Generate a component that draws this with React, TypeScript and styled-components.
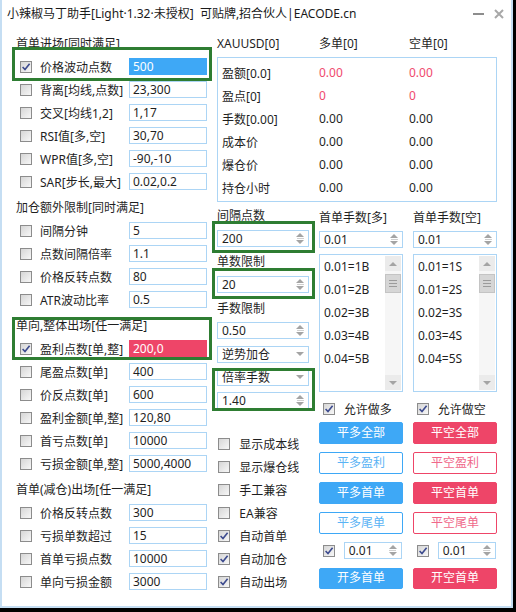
import styled, { createGlobalStyle } from "styled-components";

const BLUE = "#3ea8f6";
const RED = "#ee4568";
const GREEN = "#2e7d32";
const LINE = "#acd5f5";

const GlobalStyle = createGlobalStyle`
  html, body { margin: 0; padding: 0; background: #000; }
  body {
    font-family: "Noto Sans", "Noto Sans CJK SC", sans-serif;
    font-size: 12px;
    color: #1f1f1f;
  }
`;

type Entry = { label: string; value: string; on?: boolean; fill?: string };

const entryRows: Entry[] = [
  { label: "价格波动点数", value: "500", on: true, fill: BLUE },
  { label: "背离[均线,点数]", value: "23,300" },
  { label: "交叉[均线1,2]", value: "1,17" },
  { label: "RSI值[多,空]", value: "30,70" },
  { label: "WPR值[多,空]", value: "-90,-10" },
  { label: "SAR[步长,最大]", value: "0.02,0.2" },
];

const addRows: Entry[] = [
  { label: "间隔分钟", value: "5" },
  { label: "点数间隔倍率", value: "1.1" },
  { label: "价格反转点数", value: "80" },
  { label: "ATR波动比率", value: "0.5" },
];

const exitRows: Entry[] = [
  { label: "盈利点数[单,整]", value: "200,0", on: true, fill: RED },
  { label: "尾盈点数[单]", value: "400" },
  { label: "价反点数[单]", value: "600" },
  { label: "盈利金额[单,整]", value: "120,80" },
  { label: "首亏点数[单]", value: "10000" },
  { label: "亏损金额[单,整]", value: "5000,4000" },
];

const firstExitRows: Entry[] = [
  { label: "价格反转点数", value: "300" },
  { label: "亏损单数超过", value: "15" },
  { label: "首单亏损点数", value: "10000" },
  { label: "单向亏损金额", value: "3000" },
];

const infoRows = [
  { label: "盈额[0.0]", long: "0.00", short: "0.00", hot: true },
  { label: "盈点[0]", long: "0", short: "0", hot: true },
  { label: "手数[0.00]", long: "0.00", short: "0.00" },
  { label: "成本价", long: "0.00", short: "0.00" },
  { label: "爆仓价", long: "0.00", short: "0.00" },
  { label: "持仓小时", long: "0.00", short: "0.00" },
];

const toggles = [
  { label: "显示成本线" },
  { label: "显示爆仓线" },
  { label: "手工兼容" },
  { label: "EA兼容" },
  { label: "自动首单", on: true },
  { label: "自动加仓", on: true },
  { label: "自动出场", on: true },
];

const lots = ["0.01", "0.01", "0.02", "0.03", "0.04"];

export default function App() {
  return (
    <>
      <GlobalStyle />
      <Window>
        <TitleBar>
          <Caption>小辣椒马丁助手[Light·1.32·未授权]  可贴牌,招合伙人|EACODE.cn</Caption>
          <WinButtons>
            <svg width="12" height="4" viewBox="0 0 12 4">
              <rect x="0" y="1" width="11" height="2" fill="#8d8d8d" />
            </svg>
            <svg width="10" height="10" viewBox="0 0 10 10">
              <path d="M1 1 L9 9 M9 1 L1 9" stroke="#a8a8a8" strokeWidth="2" />
            </svg>
          </WinButtons>
        </TitleBar>

        <Body>
          <LeftCol>
            <SectionTitle>首单进场[同时满足]</SectionTitle>
            {entryRows.map((r, i) =>
              i === 0 ? (
                <Framed key={r.label} $top={-8} $bottom={-3} $left={0} $right={0}>
                  <EntryRow {...r} />
                </Framed>
              ) : (
                <EntryRow key={r.label} {...r} />
              )
            )}

            <SectionTitle $gap={3}>加仓额外限制[同时满足]</SectionTitle>
            {addRows.map((r) => (
              <EntryRow key={r.label} {...r} />
            ))}

            <Framed $mt={3} $top={3} $bottom={0} $left={0} $right={0}>
              <SectionTitle>单向,整体出场[任一满足]</SectionTitle>
              <EntryRow {...exitRows[0]} />
            </Framed>
            {exitRows.slice(1).map((r) => (
              <EntryRow key={r.label} {...r} />
            ))}

            <SectionTitle $gap={3}>首单(减仓)出场[任一满足]</SectionTitle>
            {firstExitRows.map((r) => (
              <EntryRow key={r.label} {...r} />
            ))}
          </LeftCol>

          <RightArea>
            <Header>
              <span>XAUUSD[0]</span>
              <span>多单[0]</span>
              <span>空单[0]</span>
            </Header>
            <InfoBox>
              {infoRows.map((r) => (
                <InfoRow key={r.label}>
                  <span>{r.label}</span>
                  <Value $hot={r.hot}>{r.long}</Value>
                  <Value $hot={r.hot}>{r.short}</Value>
                </InfoRow>
              ))}
            </InfoBox>

            <Lower>
              <MidCol>
                <Slot>间隔点数</Slot>
                <Framed $top={-6} $bottom={-3.5} $left={-5} $right={-6}>
                  <Slot>
                    <Spin value="200" />
                  </Slot>
                </Framed>
                <Slot>单数限制</Slot>
                <Framed $top={-4.5} $bottom={-3} $left={-5} $right={-6}>
                  <Slot>
                    <Spin value="20" />
                  </Slot>
                </Framed>
                <Slot>手数限制</Slot>
                <Slot>
                  <Spin value="0.50" />
                </Slot>
                <Slot>
                  <Select value="逆势加仓" />
                </Slot>
                <Framed $top={2.5} $bottom={1.5} $left={-5} $right={-6}>
                  <Slot>
                    <Select value="倍率手数" />
                  </Slot>
                  <Slot>
                    <Spin value="1.40" />
                  </Slot>
                </Framed>

                <ToggleList>
                  {toggles.map((t) => (
                    <ToggleRow key={t.label}>
                      <Check on={t.on} />
                      <span>{t.label}</span>
                    </ToggleRow>
                  ))}
                </ToggleList>
              </MidCol>

              <RightCols>
                <Pair $mt={3} $h={23}>
                  <CellText>首单手数[多]</CellText>
                  <CellText>首单手数[空]</CellText>
                </Pair>
                <Pair $h={23}>
                  <Spin value="0.01" />
                  <Spin value="0.01" />
                </Pair>
                <Pair $mt={3} $h={138}>
                  <LotList suffix="B" />
                  <LotList suffix="S" />
                </Pair>
                <Pair $mt={6} $h={22}>
                  <CheckCell>
                    <Check on />
                    <span>允许做多</span>
                  </CheckCell>
                  <CheckCell>
                    <Check on />
                    <span>允许做空</span>
                  </CheckCell>
                </Pair>
                <Pair $mt={2} $h={21.5}>
                  <Btn $tone={BLUE}>平多全部</Btn>
                  <Btn $tone={RED}>平空全部</Btn>
                </Pair>
                <Pair $mt={8.5} $h={21.5}>
                  <Btn $tone={BLUE} $outline>平多盈利</Btn>
                  <Btn $tone={RED} $outline>平空盈利</Btn>
                </Pair>
                <Pair $mt={8.5} $h={21.5}>
                  <Btn $tone={BLUE}>平多首单</Btn>
                  <Btn $tone={RED}>平空首单</Btn>
                </Pair>
                <Pair $mt={8.5} $h={21.5}>
                  <Btn $tone={BLUE} $outline>平多尾单</Btn>
                  <Btn $tone={RED} $outline>平空尾单</Btn>
                </Pair>
                <Pair $mt={8.5} $h={17.5}>
                  <CheckCell>
                    <Check on />
                    <Spin value="0.01" width={58} />
                  </CheckCell>
                  <CheckCell>
                    <Check on />
                    <Spin value="0.01" width={58} />
                  </CheckCell>
                </Pair>
                <Pair $mt={8} $h={21.5}>
                  <Btn $tone={BLUE}>开多首单</Btn>
                  <Btn $tone={RED}>开空首单</Btn>
                </Pair>
              </RightCols>
            </Lower>
          </RightArea>
        </Body>
      </Window>
    </>
  );
}

function EntryRow({ label, value, on, fill }: Entry) {
  return (
    <Row>
      <Check on={on} />
      <span>{label}</span>
      <Field $fill={fill}>{value}</Field>
    </Row>
  );
}

function Check({ on }: { on?: boolean }) {
  return (
    <Box>
      {on && (
        <svg width="10" height="10" viewBox="0 0 10 10">
          <path d="M1.6 5 L4 7.6 L8.6 1.8" fill="none" stroke="#3d4b8e" strokeWidth="1.6" />
        </svg>
      )}
    </Box>
  );
}

function Spin({ value, width }: { value: string; width?: number }) {
  return (
    <SpinBox $w={width}>
      <SpinText>{value}</SpinText>
      <Arrows>
        <TriUp />
        <Tick />
        <TriDown />
      </Arrows>
    </SpinBox>
  );
}

function Select({ value }: { value: string }) {
  return (
    <SpinBox>
      <SpinText>{value}</SpinText>
      <TriDown />
    </SpinBox>
  );
}

function LotList({ suffix }: { suffix: string }) {
  return (
    <ListBox>
      <ListItems>
        {lots.map((l, i) => (
          <ListItem key={i}>
            {l}={i + 1}
            {suffix}
          </ListItem>
        ))}
      </ListItems>
      <ScrollBar>
        <ScrollBtn>
          <TriUp />
        </ScrollBtn>
        <Thumb>
          <Grip />
          <Grip />
          <Grip />
        </Thumb>
        <ScrollBtn $end>
          <TriDown />
        </ScrollBtn>
      </ScrollBar>
    </ListBox>
  );
}

const Window = styled.div`
  width: 509px;
  height: 606px;
  background: #fff;
  border: 2px solid #c5def3;
  border-top: none;
  display: flex;
  flex-direction: column;
`;

const TitleBar = styled.div`
  height: 30px;
  box-sizing: border-box;
  padding: 5px 7px 0 5px;
  display: flex;
  align-items: flex-start;
  line-height: 17px;
`;

const Caption = styled.span`
  white-space: pre;
  color: #1a1a1a;
`;

const WinButtons = styled.div`
  margin-left: auto;
  display: flex;
  align-items: center;
  gap: 9px;
  height: 17px;
`;

const Body = styled.div`
  display: flex;
  padding-left: 10px;
`;

const LeftCol = styled.div`
  width: 200px;
  padding-top: 2px;
  display: flex;
  flex-direction: column;
`;

const SectionTitle = styled.div<{ $gap?: number }>`
  height: 23px;
  line-height: 23px;
  padding-left: 4px;
  margin-top: ${(p) => p.$gap ?? 0}px;
  white-space: nowrap;
`;

const Framed = styled.div<{ $top: number; $bottom: number; $left: number; $right: number; $mt?: number }>`
  position: relative;
  margin-top: ${(p) => p.$mt ?? 0}px;
  &::after {
    content: "";
    position: absolute;
    top: ${(p) => p.$top}px;
    bottom: ${(p) => p.$bottom}px;
    left: ${(p) => p.$left}px;
    right: ${(p) => p.$right}px;
    border: 3px solid ${GREEN};
    pointer-events: none;
  }
`;

const Row = styled.div`
  display: grid;
  grid-template-columns: 20px 89px 78px;
  align-items: center;
  padding-left: 8px;
  height: 23px;
  white-space: nowrap;
`;

const Field = styled.div<{ $fill?: string }>`
  height: 17px;
  box-sizing: border-box;
  border: 1px solid ${(p) => p.$fill ?? LINE};
  background: ${(p) => p.$fill ?? "#fff"};
  color: ${(p) => (p.$fill ? "#fff" : "#1f1f1f")};
  padding-left: 3px;
  line-height: 15px;
`;

const Box = styled.span`
  width: 12px;
  height: 12px;
  box-sizing: border-box;
  border: 1px solid #8c8c8c;
  background: linear-gradient(135deg, #d6d6d6 0%, #f7f7f7 100%);
  display: inline-flex;
  align-items: center;
  justify-content: center;
  flex-shrink: 0;
`;

const RightArea = styled.div`
  margin-left: 5px;
  width: 280px;
  display: flex;
  flex-direction: column;
`;

const Header = styled.div`
  display: grid;
  grid-template-columns: 102px 90px 1fr;
  height: 23px;
  line-height: 23px;
  margin-top: 2px;
`;

const InfoBox = styled.div`
  margin-top: 2px;
  border: 1px solid ${LINE};
  padding: 3px 0 2px 4px;
`;

const InfoRow = styled.div`
  display: grid;
  grid-template-columns: 97px 90px 1fr;
  height: 23px;
  align-items: center;
`;

const Value = styled.span<{ $hot?: boolean }>`
  color: ${(p) => (p.$hot ? "#f04a6e" : "#1f1f1f")};
`;

const Lower = styled.div`
  display: flex;
`;

const MidCol = styled.div`
  width: 92px;
  padding-top: 1.4px;
  display: flex;
  flex-direction: column;
`;

const Slot = styled.div`
  height: 23.2px;
  display: flex;
  align-items: center;
  white-space: nowrap;
`;

const SpinBox = styled.div<{ $w?: number }>`
  width: ${(p) => (p.$w ? `${p.$w}px` : "100%")};
  height: 17px;
  box-sizing: border-box;
  border: 1px solid ${LINE};
  background: #fff;
  display: flex;
  align-items: center;
  padding: 0 4px 0 4px;
`;

const SpinText = styled.span`
  flex: 1;
  line-height: 15px;
  white-space: nowrap;
`;

const Arrows = styled.span`
  display: flex;
  flex-direction: column;
  align-items: center;
  gap: 1px;
`;

const TriUp = styled.span`
  width: 0;
  height: 0;
  border-left: 4px solid transparent;
  border-right: 4px solid transparent;
  border-bottom: 4px solid #a4a4a4;
`;

const TriDown = styled.span`
  width: 0;
  height: 0;
  border-left: 4px solid transparent;
  border-right: 4px solid transparent;
  border-top: 4px solid #a4a4a4;
`;

const Tick = styled.span`
  width: 7px;
  height: 1px;
  background: #cfcfcf;
`;

const ToggleList = styled.div`
  margin-top: 20.6px;
  display: flex;
  flex-direction: column;
`;

const ToggleRow = styled.div`
  height: 23px;
  display: flex;
  align-items: center;
  gap: 9px;
  padding-left: 1.3px;
  white-space: nowrap;
`;

const RightCols = styled.div`
  margin-left: 10px;
  width: 178px;
  display: flex;
  flex-direction: column;
`;

const Pair = styled.div<{ $mt?: number; $h: number }>`
  display: grid;
  grid-template-columns: 84px 84px;
  column-gap: 10px;
  align-items: center;
  margin-top: ${(p) => p.$mt ?? 0}px;
  height: ${(p) => p.$h}px;
`;

const CellText = styled.span`
  white-space: nowrap;
`;

const CheckCell = styled.div`
  display: flex;
  align-items: center;
  gap: 9px;
  padding-left: 3.7px;
  white-space: nowrap;
`;

const Btn = styled.button<{ $tone: string; $outline?: boolean }>`
  height: 100%;
  width: 100%;
  padding: 0;
  box-sizing: border-box;
  border: 1px solid ${(p) => p.$tone};
  border-radius: 2px;
  background: ${(p) => (p.$outline ? "#fff" : p.$tone)};
  color: ${(p) => (p.$outline ? (p.$tone === BLUE ? "#5ab3f5" : "#f0688a") : "#fff")};
  font: inherit;
  font-size: 12px;
  line-height: 1;
`;

const ListBox = styled.div`
  height: 100%;
  box-sizing: border-box;
  border: 1px solid ${LINE};
  display: flex;
`;

const ListItems = styled.div`
  flex: 1;
  padding-left: 4px;
`;

const ListItem = styled.div`
  height: 23px;
  line-height: 23px;
`;

const ScrollBar = styled.div`
  width: 16px;
  margin: 1px 1px 1px 0;
  display: flex;
  flex-direction: column;
  background: #f6f6f6;
`;

const ScrollBtn = styled.div<{ $end?: boolean }>`
  height: 15px;
  background: #ebebeb;
  display: flex;
  align-items: center;
  justify-content: center;
  margin-top: ${(p) => (p.$end ? "auto" : "0")};
`;

const Thumb = styled.div`
  margin-top: 3px;
  height: 19px;
  box-sizing: border-box;
  background: #d6d6d6;
  border: 1px solid #c4c4c4;
  display: flex;
  flex-direction: column;
  align-items: center;
  justify-content: center;
  gap: 2px;
`;

const Grip = styled.span`
  width: 8px;
  height: 1px;
  background: #9c9c9c;
`;
